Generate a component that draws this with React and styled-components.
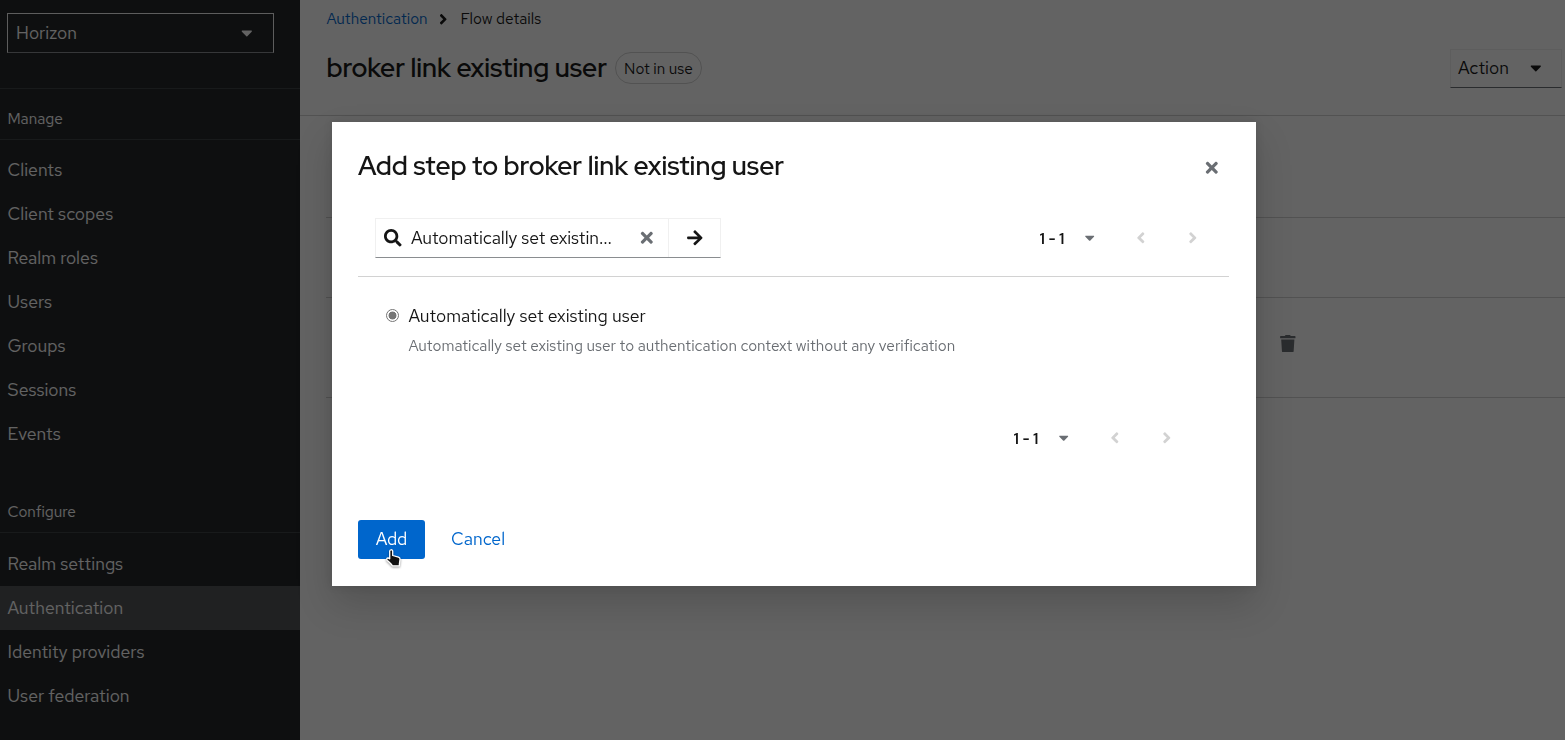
import React from "react";
import styled, { createGlobalStyle } from "styled-components";
import {
  FaCaretDown,
  FaAngleLeft,
  FaAngleRight,
  FaSearch,
  FaTimes,
  FaArrowRight,
  FaTrash,
} from "react-icons/fa";

const GlobalStyle = createGlobalStyle`
  *, *::before, *::after { box-sizing: border-box; }
  body {
    margin: 0;
    overflow: hidden;
    background: #fff;
    color: #151515;
    font-family: "Red Hat Text", Lato, "Liberation Sans", sans-serif;
    font-size: 17.6px;
    line-height: 26px;
  }
  svg { display: block; flex: none; }
  button { font: inherit; cursor: pointer; }
`;

const Text = styled.span`
  white-space: pre;
`;

const Page = styled.div`
  display: flex;
  height: 740px;
`;

const Sidebar = styled.nav`
  flex: 0 0 300px;
  padding-top: 13px;
  background: #212427;
  color: #fff;
`;

const RealmSelect = styled.div`
  display: flex;
  align-items: center;
  justify-content: space-between;
  width: 267px;
  height: 40px;
  margin: 0 0 35px 7px;
  padding: 0 17px 0 8px;
  border: 1px solid #f0f0f0;
  border-bottom-color: #8a8d90;
`;

const NavSection = styled.section`
  & + & { margin-top: 26px; }
`;

const NavHeading = styled.h2`
  height: ${(p) => (p.$ruled ? 52 : 51)}px;
  margin: 0 0 ${(p) => (p.$ruled ? 8 : 9)}px;
  padding: 17px 7.5px 0;
  border-top: ${(p) => (p.$ruled ? "1px solid #3c3f42" : "0")};
  border-bottom: 1px solid #3c3f42;
  font-size: 15.4px;
  font-weight: 400;
`;

const NavItem = styled.a`
  display: flex;
  align-items: center;
  height: 44px;
  padding: 0 7.5px;
  background: ${(p) => (p.$active ? "#4f5255" : "transparent")};
`;

const Main = styled.main`
  flex: 1;
  min-width: 0;
`;

const PageHeader = styled.header`
  height: 116px;
  padding: 6px 3px 0 26.4px;
  border-bottom: 1px solid #d2d2d2;
`;

const Breadcrumb = styled.div`
  display: flex;
  align-items: center;
  height: 26px;
  font-size: 15.4px;
`;

const BreadcrumbLink = styled.a`
  width: 109px;
  color: #06c;
`;

const BreadcrumbPage = styled.span`
  margin-left: 8.5px;
`;

const TitleRow = styled.div`
  display: flex;
  align-items: center;
  height: 39px;
  margin-top: 17px;
`;

const PageTitle = styled.h1`
  width: 288.6px;
  margin: 0 0 2px;
  font-family: "Red Hat Display", "Red Hat Text", Lato, sans-serif;
  font-size: 26.4px;
  font-weight: 600;
`;

const StatusLabel = styled.span`
  width: 87px;
  height: 32px;
  margin-bottom: 1.5px;
  border: 1px solid #d2d2d2;
  border-radius: 33px;
  font-size: 15.4px;
  line-height: 31px;
  text-align: center;
`;

const ActionToggle = styled.div`
  display: flex;
  align-items: center;
  justify-content: space-between;
  width: 112px;
  height: 39px;
  margin-left: auto;
  padding: 0 16px 2px 7px;
  border: 1px solid #f0f0f0;
  border-bottom-color: #6a6e73;
`;

const StepRow = styled.div`
  display: flex;
  align-items: center;
  height: ${(p) => p.$height}px;
  margin-left: 26px;
  padding: 0 0 8px 953px;
  border-bottom: 1px solid #d2d2d2;
  color: #6a6e73;
`;

const Backdrop = styled.div`
  position: fixed;
  inset: 0;
  display: flex;
  align-items: flex-start;
  padding: 122px 0 0 332px;
  background: rgba(3, 3, 3, 0.62);
`;

const Modal = styled.div`
  width: 924px;
  height: 464px;
  padding: 27px 27px 0 26px;
  background: #fff;
  box-shadow: 0 17.6px 35.2px rgba(3, 3, 3, 0.16), 0 0 8.8px rgba(3, 3, 3, 0.1);
`;

const ModalHeader = styled.div`
  display: flex;
  align-items: center;
  justify-content: space-between;
  height: 36px;
  padding-right: 8px;
  color: #6a6e73;
`;

const ModalTitle = styled.h2`
  margin: 0 0 3px;
  color: #151515;
  font-family: "Red Hat Display", "Red Hat Text", Lato, sans-serif;
  font-size: 26.4px;
  font-weight: 600;
`;

const CloseButton = styled.span`
  padding-top: 2px;
`;

const Toolbar = styled.div`
  display: flex;
  justify-content: space-between;
  height: 92px;
  padding: 33px 10px 18px 17px;
  border-bottom: 1px solid #d2d2d2;
`;

const SearchGroup = styled.div`
  display: flex;
  width: 346px;
  height: 40px;
  border: 1px solid #f0f0f0;
  border-bottom-color: #8a8d90;
`;

const SearchField = styled.div`
  display: flex;
  align-items: center;
  width: 292px;
  padding: 0 12px 0 8px;
  color: #6a6e73;
`;

const SearchValue = styled.span`
  flex: 1;
  margin-left: 9.4px;
  color: #151515;
  letter-spacing: -0.05px;
`;

const SearchSubmit = styled.div`
  display: flex;
  flex: 1;
  align-items: center;
  justify-content: center;
  border-left: 1px solid #f0f0f0;
`;

const Pager = styled.div`
  display: grid;
  grid-template-columns: 35px 30px 10px 52.4px 52px;
  align-items: center;
  justify-items: center;
  justify-content: end;
  height: 40px;
  color: #d2d2d2;
`;

const PagerRange = styled.b`
  justify-self: start;
  padding-top: 1px;
  color: #151515;
  font-size: 15.4px;
  font-weight: 600;
`;

const PagerCaret = styled.span`
  color: #6a6e73;
`;

const Option = styled.label`
  display: grid;
  grid-template-columns: 22.4px 1fr;
  row-gap: 4px;
  height: 141px;
  padding: 26px 0 0 28px;
  align-content: start;
  align-items: center;
`;

const RadioDot = styled.span`
  width: 13px;
  height: 13px;
  margin-bottom: 1px;
  border: 1px solid #767676;
  border-radius: 50%;
  background: radial-gradient(circle, #767676 3.6px, #fff 4.3px);
`;

const OptionHelp = styled.span`
  grid-column: 2;
  color: #6a6e73;
  font-size: 15.4px;
`;

const PagerFooter = styled.div`
  padding-right: 36px;
`;

const ModalFooter = styled.div`
  display: flex;
  margin-top: 62px;
`;

const Button = styled.button`
  width: ${(p) => (p.$primary ? 67 : 106)}px;
  height: 39px;
  padding: 0 0 2px;
  border: 0;
  border-radius: 3px;
  background: ${(p) => (p.$primary ? "#06c" : "transparent")};
  color: ${(p) => (p.$primary ? "#fff" : "#06c")};
`;

const Pointer = styled.svg`
  position: absolute;
  left: 384px;
  top: 547px;
  filter: drop-shadow(0 1px 1px rgba(0, 0, 0, 0.4));
`;

const manage = [
  "Clients",
  "Client scopes",
  "Realm roles",
  "Users",
  "Groups",
  "Sessions",
  "Events",
];

const configure = [
  "Realm settings",
  "Authentication",
  "Identity providers",
  "User federation",
];

function NavGroup({ title, items, ruled, active }) {
  return (
    <NavSection>
      <NavHeading $ruled={ruled}>
        <Text>{title}</Text>
      </NavHeading>
      {items.map((label) => (
        <NavItem key={label} $active={label === active}>
          <Text>{label}</Text>
        </NavItem>
      ))}
    </NavSection>
  );
}

function Pagination() {
  return (
    <Pager>
      <PagerRange>
        <Text>1 - 1</Text>
      </PagerRange>
      <PagerCaret>
        <FaCaretDown size={15.4} />
      </PagerCaret>
      <span />
      <FaAngleLeft size={17.6} />
      <FaAngleRight size={17.6} />
    </Pager>
  );
}

export default function App() {
  return (
    <>
      <GlobalStyle />
      <Page>
        <Sidebar>
          <RealmSelect>
            <Text>Horizon</Text>
            <FaCaretDown size={17.6} />
          </RealmSelect>
          <NavGroup title="Manage" items={manage} ruled />
          <NavGroup title="Configure" items={configure} active="Authentication" />
        </Sidebar>
        <Main>
          <PageHeader>
            <Breadcrumb>
              <BreadcrumbLink>
                <Text>Authentication</Text>
              </BreadcrumbLink>
              <FaAngleRight size={16.5} />
              <BreadcrumbPage>
                <Text>Flow details</Text>
              </BreadcrumbPage>
            </Breadcrumb>
            <TitleRow>
              <PageTitle>
                <Text>broker link existing user</Text>
              </PageTitle>
              <StatusLabel>
                <Text>Not in use</Text>
              </StatusLabel>
              <ActionToggle>
                <Text>Action</Text>
                <FaCaretDown size={17.6} />
              </ActionToggle>
            </TitleRow>
          </PageHeader>
          <StepRow $height={102} />
          <StepRow $height={80} />
          <StepRow $height={100}>
            <FaTrash size={17.6} />
          </StepRow>
        </Main>
      </Page>
      <Backdrop>
        <Modal role="dialog">
          <ModalHeader>
            <ModalTitle>
              <Text>Add step to broker link existing user</Text>
            </ModalTitle>
            <CloseButton>
              <FaTimes size={17.6} />
            </CloseButton>
          </ModalHeader>
          <Toolbar>
            <SearchGroup>
              <SearchField>
                <FaSearch size={17.6} color="#151515" />
                <SearchValue>
                  <Text>Automatically set existin...</Text>
                </SearchValue>
                <FaTimes size={17.6} />
              </SearchField>
              <SearchSubmit>
                <FaArrowRight size={17.6} />
              </SearchSubmit>
            </SearchGroup>
            <Pagination />
          </Toolbar>
          <Option>
            <RadioDot />
            <Text>Automatically set existing user</Text>
            <OptionHelp>
              <Text>Automatically set existing user to authentication context without any verification</Text>
            </OptionHelp>
          </Option>
          <PagerFooter>
            <Pagination />
          </PagerFooter>
          <ModalFooter>
            <Button $primary>
              <Text>Add</Text>
            </Button>
            <Button>
              <Text>Cancel</Text>
            </Button>
          </ModalFooter>
        </Modal>
      </Backdrop>
      <Pointer width="19" height="22" viewBox="0 0 19 22">
        <path
          d="M6.8 2.8c1-.2 1.900.4 1.900 1.500v4.200l5.800 1.700c1.100.4 1.700 1.200 1.500 2.400l-.6 4.200v2H8.300c-1-2-3-3.400-5-5.300-1-1-.6-2.300.5-2.500.7-.1 1.300.2 1.900.8V4.300c0-.8.4-1.400 1.100-1.500z"
          fill="#111"
          stroke="#fff"
          strokeWidth="1.3"
          strokeLinejoin="round"
        />
      </Pointer>
    </>
  );
}
